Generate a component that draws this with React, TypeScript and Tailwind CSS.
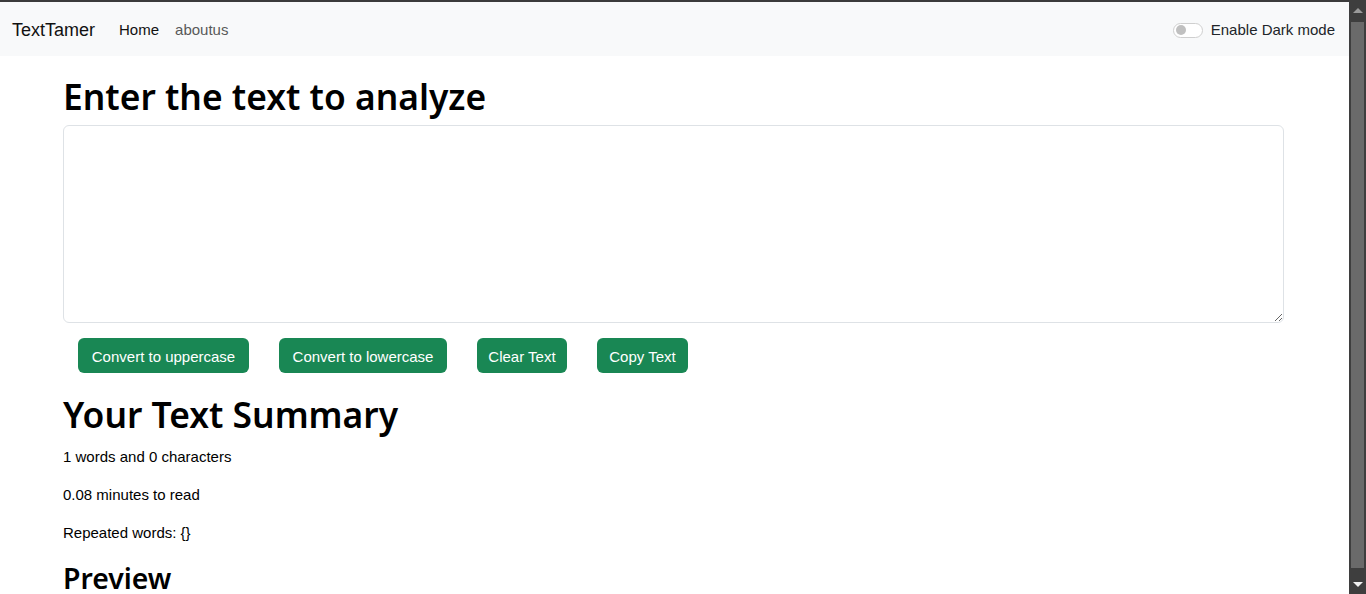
import { useState } from 'react';

const body = { fontFamily: '"Liberation Sans", Arial, sans-serif' };
const heading = { fontFamily: '"Noto Sans", "Liberation Sans", sans-serif' };

function wordCount(text: string) {
  return text.split(' ').length;
}

const buttons = [
  { label: 'Convert to uppercase', width: 'w-[171px]' },
  { label: 'Convert to lowercase', width: 'w-[168px]' },
  { label: 'Clear Text', width: 'w-[90px]' },
  { label: 'Copy Text', width: 'w-[91px]' },
];

export default function App() {
  const [text, setText] = useState('');
  const [dark, setDark] = useState(false);

  return (
    <div className="flex h-[594px] w-full overflow-hidden bg-white text-[#212529]" style={body}>
      <div className="flex min-w-0 flex-1 flex-col border-t-2 border-[#3b3b3b]">
        {/* Navbar */}
        <nav className="flex h-[54px] shrink-0 items-center bg-[#f8f9fa] pt-[2px] pl-3 pr-[14px]">
          <a className="text-[18px] text-[#111]">TextTamer</a>
          <div className="ml-[24px] flex items-center gap-4 text-[15px]">
            <a className="text-[#111]">Home</a>
            <a className="text-[#595959]">aboutus</a>
          </div>
          <label className="ml-auto flex items-center gap-2 text-[15px] text-[#212529]">
            <button
              type="button"
              onClick={() => setDark(!dark)}
              className="flex h-[15px] w-[30px] items-center rounded-full border border-[#cfcfcf] bg-white px-[2px]"
            >
              <span className="h-[10px] w-[10px] rounded-full bg-[#c0c0c0]" />
            </button>
            Enable Dark mode
          </label>
        </nav>

        {/* Main */}
        <div className="ml-[63px] mr-[65px] flex flex-col">
          <h1 className="mt-[19px] mb-[8px] text-[35.4px] leading-[42px] font-semibold text-black" style={heading}>
            Enter the text to analyze
          </h1>
          <textarea
            value={text}
            onChange={(e) => setText(e.target.value)}
            className="h-[198px] w-full rounded-[6px] border border-[#dee2e6] bg-white px-3 py-2 text-[15px] outline-none"
          />
          <div className="mt-[15px] flex gap-[30px] pl-[15px]">
            {buttons.map((b) => (
              <button
                key={b.label}
                type="button"
                className={`h-[35px] ${b.width} rounded-[6px] bg-[#198754] pt-[3px] text-[15px] text-white`}
              >
                {b.label}
              </button>
            ))}
          </div>
          <h2 className="mt-[20px] text-[35.4px] leading-[42px] font-semibold text-black" style={heading}>
            Your Text Summary
          </h2>
          <div className="mt-[11px] flex flex-col gap-[16px] text-[15px] leading-[22px] text-black">
            <p>{wordCount(text)} words and {text.length} characters</p>
            <p>{(0.008 * wordCount(text) * 10).toFixed(2)} minutes to read</p>
            <p>Repeated words: {'{}'}</p>
          </div>
          <h2 className="mt-[17px] text-[28.4px] leading-[34px] font-semibold text-black" style={heading}>
            Preview
          </h2>
        </div>
      </div>

      {/* Scrollbar */}
      <div className="flex w-[17px] shrink-0 flex-col items-center bg-[#3e3e3e]">
        <div className="flex h-[20px] items-center justify-center">
          <div className="h-0 w-0 border-x-[5px] border-b-[5px] border-x-transparent border-b-[#9a9a9a]" />
        </div>
        <div className="mt-[2px] h-[546px] w-[13px] bg-[#6a6a6a]" />
        <div className="mt-auto flex h-[20px] items-center justify-center">
          <div className="h-0 w-0 border-x-[5px] border-t-[5px] border-x-transparent border-t-[#f0f0f0]" />
        </div>
      </div>
    </div>
  );
}
